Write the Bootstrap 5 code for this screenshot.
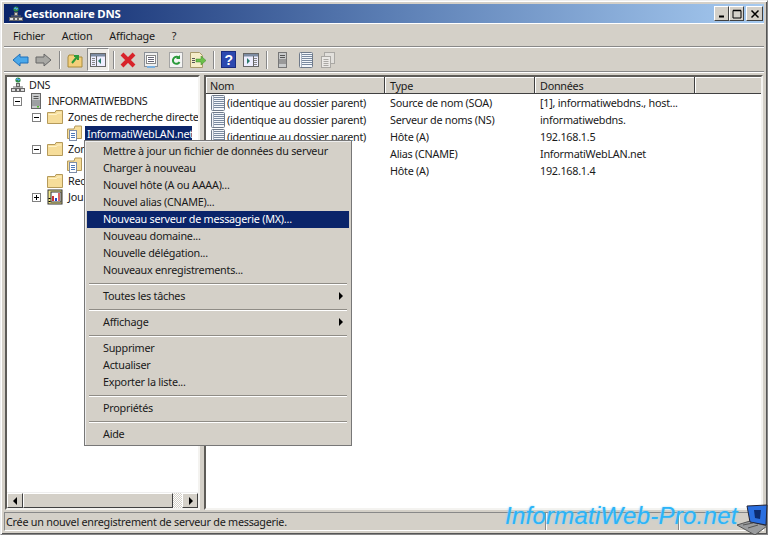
<!DOCTYPE html>
<html lang="fr"><head><meta charset="utf-8"><title>Gestionnaire DNS</title>
<link href="https://cdn.jsdelivr.net/npm/bootstrap@5.3.0/dist/css/bootstrap.min.css" rel="stylesheet">
<style>
html,body{height:535px;overflow:hidden;margin:0;background:#d4d0c8}
body{font:10.8px/16px "Noto Sans","DejaVu Sans",sans-serif;letter-spacing:-.25px;color:#1a1a1a}
svg{flex:none}
.win{height:535px;width:768px;position:relative;padding:4px;border:1px solid #888;border-top-color:#eee;border-left-color:#eee;box-shadow:inset 1px 1px 0 #fff,inset -1px -1px 0 #555;background:#d4d0c8}
.ttl{height:19px;background:linear-gradient(90deg,#0a246a,#5a7db3 50%,#a6caf0);color:#fff;font-weight:700;font-size:11.4px;letter-spacing:-.2px;margin:-1px -1px 0 -1px;padding-left:4px}
.wbtn{width:15px;height:15px;background:#d4d0c8;border:1px solid;border-color:#fff #404040 #404040 #fff;display:flex;align-items:center;justify-content:center}
.wx{width:17px;margin-left:2px}
.mbar{height:24px;border-top:1px solid #fff;border-bottom:1px solid #888;box-shadow:0 1px 0 #fff;padding:1px 0 0 9px;gap:17px;margin:0 -1px}
.tbar{height:24px;padding:0 4px;margin:1px -1px 0 -1px;border-bottom:1px solid #888;box-shadow:0 1px 0 #fff}
.tsep{width:1px;height:18px;background:#888;box-shadow:1px 0 0 #fff;flex:none}
.tb{flex:none;display:block}
.tsel{flex:none;width:22px;height:23px;background:#eeece8;border:1px solid;border-color:#888 #fff #fff #888;display:flex;align-items:center;justify-content:center}
.mid{height:435px;margin-top:3px;gap:4px}
.pane{background:#fff;border:2px solid;border-color:#5e5c58 #f4f3f0 #f4f3f0 #5e5c58;position:relative;overflow:hidden}
.ptree{width:195px;flex:none}
.plist{width:559px;flex:none}
.trow{height:16px;white-space:nowrap;display:flex;align-items:center;gap:3px}
.lv0{padding-left:3px}.lv1{padding-left:6px}.lv2{padding-left:25px}.lv2b{padding-left:40px}.lv3{padding-left:59px}
.pm{width:9px;height:9px;flex:none;border:1px solid #808080;position:relative;background:#fff}
.m3{margin-right:3px}.m4{margin-right:4px}
.pm::before{content:"";position:absolute;left:1px;right:1px;top:3px;height:1px;background:#000}
.pmp::after{content:"";position:absolute;top:1px;bottom:1px;left:3px;width:1px;background:#000}
.fgap{margin-right:2px}
.nosel{background:#0a246a;color:#fff;padding:0 0 0 2px;width:107px;line-height:15px}
.sb{position:absolute;left:0;right:0;bottom:0;height:16px;display:flex;background:#d4d0c8;border-top:1px solid #eee}
.sbb{width:16px;flex:none;background:#d4d0c8;border:1px solid;border-color:#fff #404040 #404040 #fff;display:flex;align-items:center;justify-content:center}
.thumb{width:150px;flex:none;background:#d4d0c8;border:1px solid;border-color:#fff #404040 #404040 #fff}
.hatch{flex:1;background:repeating-conic-gradient(#d4d0c8 0 25%,#fff 0 50%) 0 0/2px 2px}
.lhead{height:17px;background:#d4d0c8;display:flex;border-bottom:1px solid #404040}
.lhead>div{padding:0 0 0 5px;border-right:1px solid #404040;box-shadow:inset 1px 1px 0 #fff;line-height:17px}
.lhead>.c1{padding-left:4px}
.c1{width:179px;flex:none}.c2{width:150px;flex:none}.c3{width:160px;flex:none}.c4{flex:1;border-right:0!important}
.lrow{height:17px;display:flex;align-items:center;white-space:nowrap}
.lrow .c1{display:flex;align-items:center;gap:1px;padding-left:4px}
.lrow .c2,.lrow .c3{padding-left:5px}
.stat{height:19px;margin:2px -1px 0 -1px;border:1px solid;border-color:#888 #fff #fff #888;padding-left:1px;line-height:17px;display:flex}
.stat>span{border-right:1px solid #888;box-shadow:1px 0 0 #fff;height:17px}
.s1{width:540px}.s2{width:133px}
.ctx.dropdown-menu{position:absolute;display:block;left:83px;top:139px;width:268px;min-width:0;height:306px;padding:2px;margin:0;background:#d4d0c8;border:1px solid #777;border-radius:0;box-shadow:inset 1px 1px 0 #eee;color:#1a1a1a;z-index:5}
.ctx .dropdown-item{height:17px;padding:0 0 2px 16px;font-size:10.8px;line-height:15px;color:#1a1a1a;background:transparent;display:flex;justify-content:space-between;align-items:center;width:262px}
.ctx .dropdown-item.active{background:#0a246a;color:#fff}
.ctx .dropdown-divider{margin:4px 2px;border-top:1px solid #8f8c86;opacity:1;box-shadow:0 1px 0 #fff;height:0}
.arr{width:0;height:0;border-left:4px solid #000;border-top:4px solid transparent;border-bottom:4px solid transparent;margin-right:6px}
.wm{position:absolute;left:504px;top:500px;font:italic 24px/30px "Liberation Sans",sans-serif;letter-spacing:.25px;color:#2cb4f7;text-shadow:0 0 2px #7fd4ff;white-space:nowrap;z-index:6}
.lap{position:absolute;left:733px;top:503px;z-index:6}
</style></head><body>
<svg width="0" height="0" class="position-absolute">
<defs>
<symbol id="dns" viewBox="0 0 16 16"><circle cx="8" cy="3" r="2.600" fill="#2f8f4a"/><path d="M6 2.500h4M7 1l2 3" stroke="#4aa0e0" fill="none"/><path d="M8 6v4M3 10h10" stroke="#666" fill="none"/><rect x="6.500" y="6.500" width="3" height="3" fill="#c9c9c9" stroke="#666"/><rect x="1.500" y="11.500" width="4" height="3" fill="#ddd" stroke="#666"/><rect x="10.500" y="11.500" width="4" height="3" fill="#ddd" stroke="#666"/><rect x="6.500" y="11.500" width="3" height="3" fill="#ddd" stroke="#666"/></symbol>
<symbol id="srv" viewBox="0 0 16 16"><rect x="2.500" y=".5" width="9" height="15" fill="#c8cacb" stroke="#666"/><path d="M4.500 3.500h5M4.500 5.500h5" stroke="#555"/><rect x="3" y="7" width="8" height="6" fill="#9da0a2"/><rect x="8" y="13" width="2" height="1.500" fill="#5b3"/></symbol>
<symbol id="fld" viewBox="0 0 16 16"><path d="M.5 3.500V14.500H15.500V1.500H9L8 3.500Z" fill="#f6dd9a" stroke="#b59a5a"/><path d="M1.500 5.500h8l1-1.500h4" stroke="#fff3c8" fill="none"/></symbol>
<symbol id="zon" viewBox="0 0 16 16"><path d="M1.500 4V13.500H15.500V1H9L8 4Z" fill="#f6dd9a" stroke="#b59a5a"/><rect x="3.500" y="5.500" width="7" height="10" fill="#fff" stroke="#7f8ea8"/><path d="M5 8.500h4M5 10.500h4M5 12.500h4" stroke="#4d78b8"/></symbol>
<symbol id="jou" viewBox="0 0 16 16"><rect x="1" y="1" width="14" height="14" fill="#f3e88a" stroke="#333"/><rect x="4" y="3" width="10" height="10" fill="#fff" stroke="#333"/><path d="M6 7v5" stroke="#c33" stroke-width="2"/><path d="M9 9v3" stroke="#24c" stroke-width="2"/><path d="M12 4v8" stroke="#c33" stroke-width="1.500"/><path d="M1.500 9.500h2M1.500 12.500h2" stroke="#000"/></symbol>
<symbol id="rec" viewBox="0 0 16 16"><rect x="1.500" y=".5" width="13" height="15" rx="1" fill="#f4f7fb" stroke="#6f7a8a"/><path d="M3.500 1v14" stroke="#a9b2c0"/><path d="M4 2.500h10M4 4.500h10M4 6.500h10M4 8.500h10M4 10.500h10M4 12.500h10" stroke="#7a8aa0"/></symbol>
</defs></svg>
<div class="win">
 <div class="ttl d-flex align-items-center">
  <svg width="16" height="16"><use href="#dns"/></svg><span class="flex-grow-1">Gestionnaire DNS</span>
  <div class="d-flex" style="margin-right:1px">
   <div class="wbtn"><svg width="8" height="8"><path d="M1 6.500h5" stroke="#000" stroke-width="2"/></svg></div>
   <div class="wbtn"><svg width="10" height="10"><path d="M1 1.500h8M1 1.500v7.500h8v-7.500" stroke="#000" fill="none"/><path d="M1 1.500h8" stroke="#000" stroke-width="1.500"/></svg></div>
   <div class="wbtn wx"><svg width="10" height="10"><path d="M1.500 1.500l7 7M8.500 1.500l-7 7" stroke="#000" stroke-width="1.500"/></svg></div>
  </div>
 </div>
 <div class="mbar d-flex align-items-center"><span>Fichier</span><span>Action</span><span>Affichage</span><span>?</span></div>
 <div class="tbar d-flex align-items-center">
  <svg class="tb" width="17" height="14" style="margin-left:4px"><path d="M1 7l7-6v3h8v6H8v3z" fill="#4aa8ea" stroke="#1f6fb8"/></svg>
  <svg class="tb" width="17" height="14" style="margin-left:6px"><path d="M16 7L9 1v3H1v6h8v3z" fill="#a8a8a4" stroke="#666"/></svg>
  <span class="tsep" style="margin:0 7px 0 7px"></span>
  <svg class="tb" width="16" height="16"><path d="M1 5V15H15V5H8L7 3H2Z" fill="#f3cf7a" stroke="#a88a3c"/><path d="M5 11L10 5M7 4h4v4" stroke="#2a9a3a" stroke-width="2" fill="none"/></svg>
  <span class="tsel" style="margin-left:4px"><svg width="16" height="14"><rect x=".5" y=".5" width="15" height="13" fill="#eef" stroke="#666"/><rect x="1" y="1" width="14" height="2.500" fill="#7d8ca3"/><path d="M6.500 3v10" stroke="#666"/><path d="M11 5l-3 3 3 3z" fill="#2a7a6a"/><path d="M2 5.500h3M2 7.500h3M2 9.500h3M2 11.500h3" stroke="#888"/></svg></span>
  <span class="tsep" style="margin:0 6px 0 4px"></span>
  <svg class="tb" width="16" height="16"><path d="M2 2l12 12M14 2L2 14" stroke="#d8232a" stroke-width="4"/></svg>
  <svg class="tb" width="16" height="16" style="margin-left:7px"><rect x="1.500" y=".5" width="13" height="14" fill="#eee" stroke="#8a8f96"/><rect x="3.500" y="3.500" width="9" height="8" fill="#fff" stroke="#888"/><path d="M5 5.500h6M5 7.500h6M5 9.500h6" stroke="#667"/><path d="M4 15h8" stroke="#7ab0e0" stroke-width="2"/></svg>
  <svg class="tb" width="16" height="16" style="margin-left:9px"><rect x="1.500" y=".5" width="13" height="15" fill="#f4f4f4" stroke="#a4a4a4"/><path d="M11 6a3.500 3.500 0 1 0 .5 4" stroke="#2a9a3a" stroke-width="2" fill="none"/><path d="M12 3v4H8z" fill="#2a9a3a"/></svg>
  <svg class="tb" width="17" height="16" style="margin-left:5px"><path d="M1.500.5h9l3 3v12h-12z" fill="#f6edc8" stroke="#a89a6a"/><path d="M3 6.500h3M3 8.500h3M3 10.500h3" stroke="#555"/><path d="M7 7h5V4l5 4.500-5 4.500v-3H7z" fill="#6cc04a" stroke="#3a8a2a" stroke-width=".5"/></svg>
  <span class="tsep" style="margin:0 7px 0 7px"></span>
  <svg class="tb" width="15" height="17"><rect x=".5" y=".5" width="14" height="16" fill="#2c49b0" stroke="#1a2c80"/><text x="3.500" y="14" fill="#fff" font-family="Liberation Sans" font-weight="700" font-size="14">?</text></svg>
  <svg class="tb" width="16" height="14" style="margin-left:7px"><rect x=".5" y=".5" width="15" height="13" fill="#eef" stroke="#666"/><rect x="1" y="1" width="14" height="2.500" fill="#7d8ca3"/><path d="M10.500 3v10" stroke="#666"/><path d="M4 5l3 3-3 3z" fill="#2a7a6a"/><path d="M11 5.500h3M11 7.500h3M11 9.500h3M11 11.500h3" stroke="#888"/></svg>
  <span class="tsep" style="margin:0 11px 0 7px"></span>
  <svg class="tb" width="9" height="16"><rect x=".5" y=".5" width="8" height="15" fill="#c8cacb" stroke="#777"/><path d="M2 3.500h5M2 5.500h5" stroke="#555"/><rect x="1" y="7" width="7" height="5" fill="#999"/></svg>
  <svg class="tb" width="16" height="16" style="margin-left:11px"><use href="#rec"/></svg>
  <svg class="tb" width="16" height="16" style="margin-left:6px" opacity=".55"><rect x="4.500" y=".5" width="10" height="11" fill="#eee" stroke="#888"/><rect x="1.500" y="4.500" width="9" height="11" fill="#fff" stroke="#888"/><path d="M3.500 7.500h5M3.500 9.500h5M3.500 11.500h5M3.500 13.500h5" stroke="#888"/></svg>
 </div>
 <div class="mid d-flex">
  <div class="pane ptree">
   <div class="trow lv0"><svg width="16" height="16"><use href="#dns"/></svg>DNS</div>
   <div class="trow lv1"><span class="pm m4"></span><svg width="16" height="16"><use href="#srv"/></svg>INFORMATIWEBDNS</div>
   <div class="trow lv2"><span class="pm m3"></span><svg width="16" height="16" class="fgap"><use href="#fld"/></svg>Zones de recherche directe</div>
   <div class="trow lv3"><svg width="16" height="16"><use href="#zon"/></svg><span class="nosel">InformatiWebLAN.net</span></div>
   <div class="trow lv2"><span class="pm m3"></span><svg width="16" height="16" class="fgap"><use href="#fld"/></svg>Zon</div>
   <div class="trow lv3"><svg width="16" height="16"><use href="#zon"/></svg></div>
   <div class="trow lv2b"><svg width="16" height="16" class="fgap"><use href="#fld"/></svg>Rec</div>
   <div class="trow lv2"><span class="pm pmp m3"></span><svg width="16" height="16" class="fgap"><use href="#jou"/></svg>Jou</div>
   <div class="sb"><div class="sbb"><svg width="5" height="8"><path d="M4 0v8L0 4z" fill="#000"/></svg></div><div class="thumb"></div><div class="hatch"></div><div class="sbb"><svg width="5" height="8"><path d="M1 0v8l4-4z" fill="#000"/></svg></div></div>
  </div>
  <div class="pane plist">
   <div class="lhead"><div class="c1">Nom</div><div class="c2">Type</div><div class="c3">Données</div><div class="c4"></div></div>
   <div>
    <div class="lrow"><div class="c1"><svg width="16" height="16"><use href="#rec"/></svg>(identique au dossier parent)</div><div class="c2">Source de nom (SOA)</div><div class="c3">[1], informatiwebdns., host...</div></div>
    <div class="lrow"><div class="c1"><svg width="16" height="16"><use href="#rec"/></svg>(identique au dossier parent)</div><div class="c2">Serveur de noms (NS)</div><div class="c3">informatiwebdns.</div></div>
    <div class="lrow"><div class="c1"><svg width="16" height="16"><use href="#rec"/></svg>(identique au dossier parent)</div><div class="c2">Hôte (A)</div><div class="c3">192.168.1.5</div></div>
    <div class="lrow"><div class="c1"></div><div class="c2">Alias (CNAME)</div><div class="c3">InformatiWebLAN.net</div></div>
    <div class="lrow"><div class="c1"></div><div class="c2">Hôte (A)</div><div class="c3">192.168.1.4</div></div>
   </div>
  </div>
 </div>
 <div class="stat"><span class="s1">Crée un nouvel enregistrement de serveur de messagerie.</span><span class="s2"></span></div>

 <div class="dropdown-menu ctx">
  <a class="dropdown-item">Mettre à jour un fichier de données du serveur</a>
  <a class="dropdown-item">Charger à nouveau</a>
  <a class="dropdown-item">Nouvel hôte (A ou AAAA)...</a>
  <a class="dropdown-item">Nouvel alias (CNAME)...</a>
  <a class="dropdown-item active">Nouveau serveur de messagerie (MX)...</a>
  <a class="dropdown-item">Nouveau domaine...</a>
  <a class="dropdown-item">Nouvelle délégation...</a>
  <a class="dropdown-item">Nouveaux enregistrements...</a>
  <div class="dropdown-divider"></div>
  <a class="dropdown-item">Toutes les tâches<span class="arr"></span></a>
  <div class="dropdown-divider"></div>
  <a class="dropdown-item">Affichage<span class="arr"></span></a>
  <div class="dropdown-divider"></div>
  <a class="dropdown-item">Supprimer</a>
  <a class="dropdown-item">Actualiser</a>
  <a class="dropdown-item">Exporter la liste...</a>
  <div class="dropdown-divider"></div>
  <a class="dropdown-item">Propriétés</a>
  <div class="dropdown-divider"></div>
  <a class="dropdown-item">Aide</a>
 </div>
 <div class="wm">InformatiWeb-Pro.net</div>
 <svg class="lap" width="35" height="31"><path d="M3 21L16 17 33 22 21 31Z" fill="#9a9c9e" stroke="#555"/><path d="M13 2L33 1 32 21 16 18Z" fill="#2a6fe0" stroke="#223"/><path d="M20 6l7 0-1 9-5-1z" fill="#0c2c70"/><path d="M9 21l10-2M14 24l10-3" stroke="#555"/></svg>
</div>
</body></html>
